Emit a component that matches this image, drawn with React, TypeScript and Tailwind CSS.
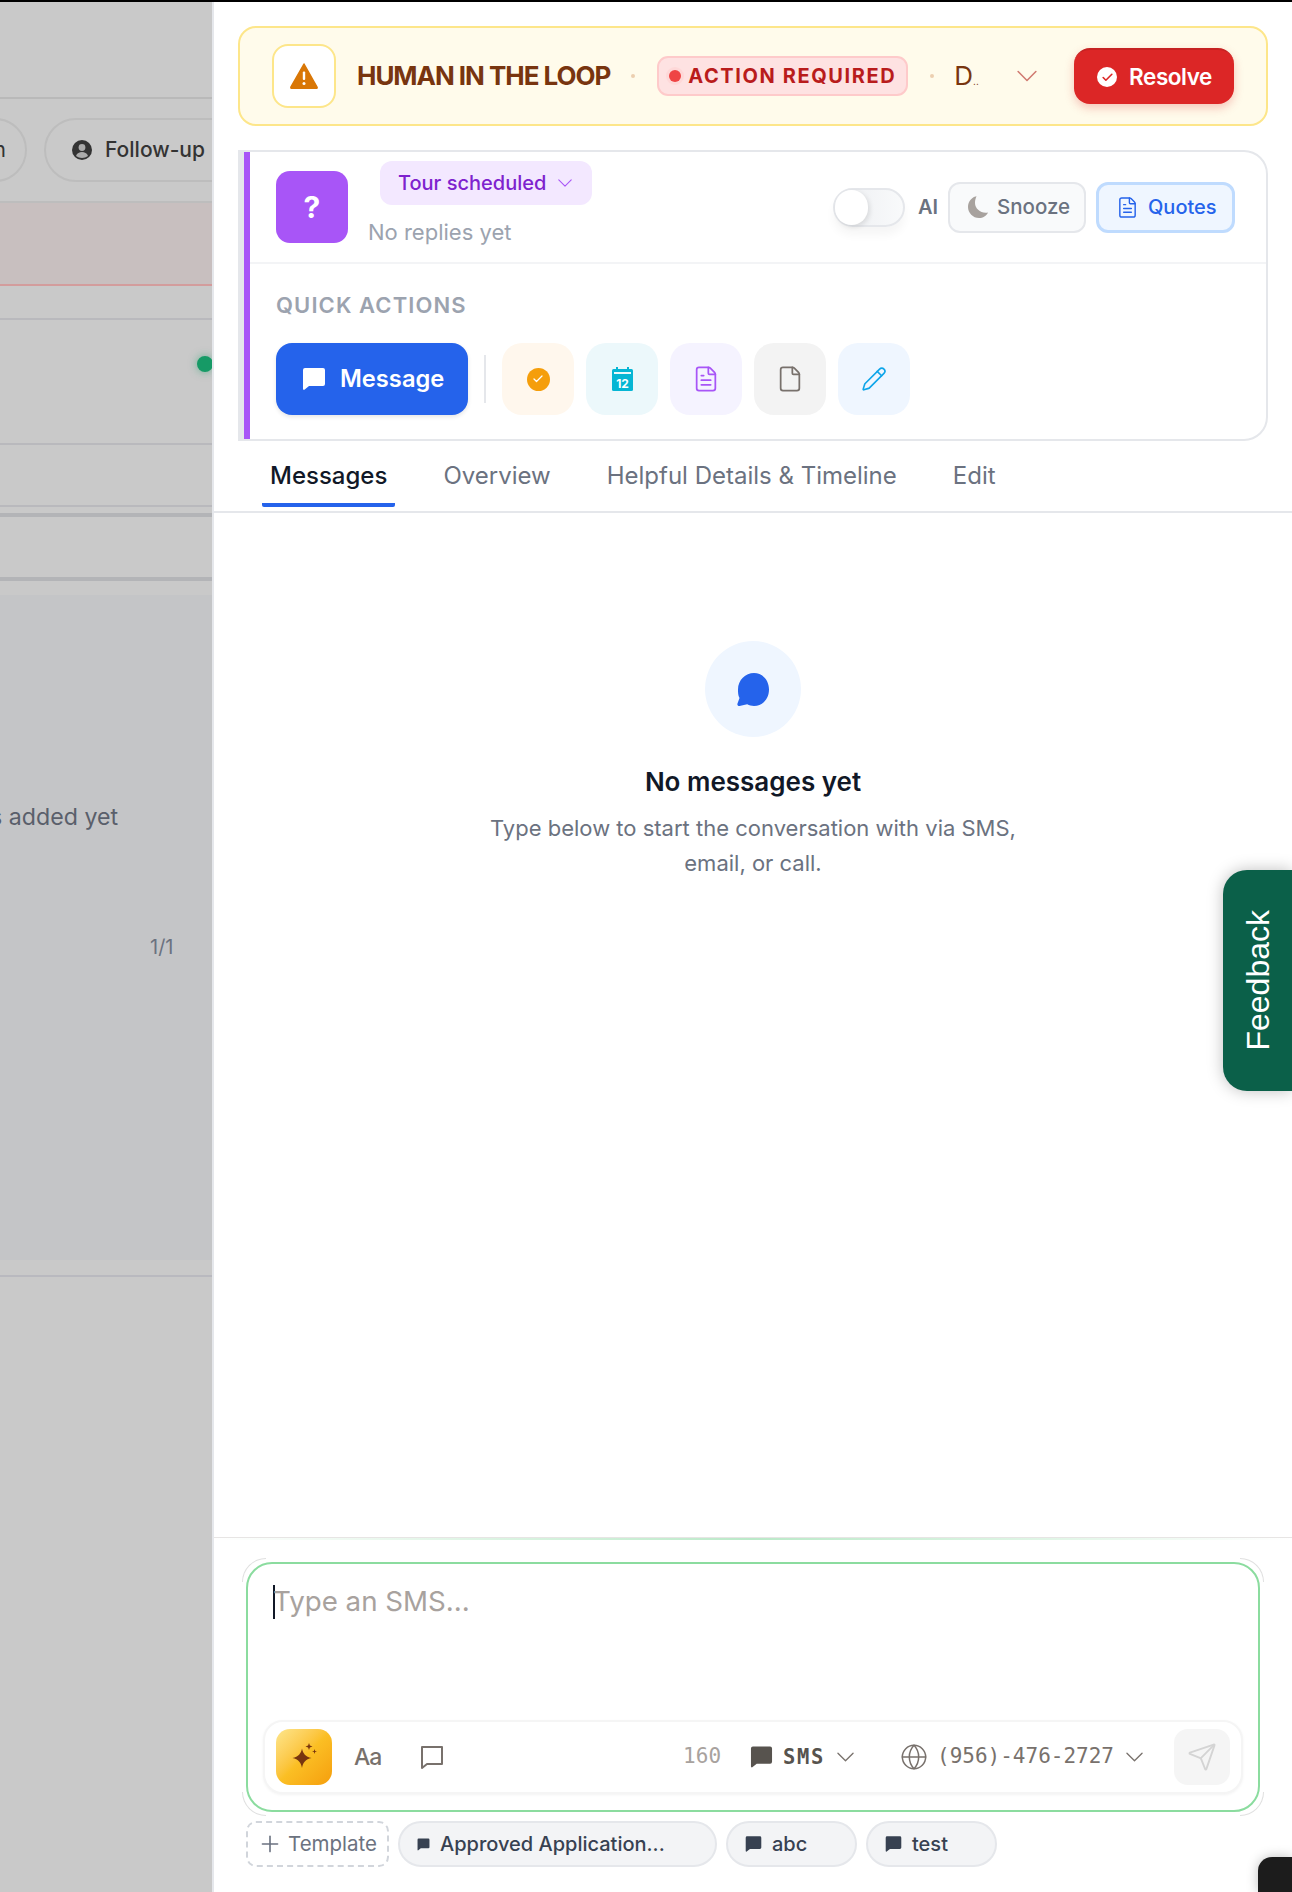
import { Check, File, FileText, Globe, Pencil, Plus, Send } from 'lucide-react';

const mono = 'font-["DejaVu_Sans_Mono",monospace]';

function Chev({ className }: { className: string }) {
  return (
    <svg viewBox="0 0 18 10" fill="none" stroke="currentColor" strokeWidth="1.4" strokeLinecap="round" strokeLinejoin="round" className={className}>
      <path d="M1 1l8 8 8-8" />
    </svg>
  );
}

function Bubble({ className }: { className: string }) {
  return (
    <svg viewBox="0 0 24 22" fill="currentColor" className={className}>
      <path d="M3 0h18a2 2 0 0 1 2 2v14a2 2 0 0 1-2 2H7l-4.600 3.700A1 1 0 0 1 1 21V2a2 2 0 0 1 2-2z" />
    </svg>
  );
}

function Chip({ label, wide }: { label: string; wide?: boolean }) {
  return (
    <div className={`flex h-[46px] items-center rounded-full border-2 border-[#e5e7eb] bg-[#f3f4f6] pl-[17px] text-[20px] font-medium text-[#374151] ${wide ? 'w-[319px] gap-[10px]' : 'w-[131px] gap-[10px]'}`}>
      <Bubble className={wide ? 'h-[13px] w-[13px] text-[#374151]' : 'h-[16px] w-[17px] text-[#374151]'} />
      {label}
    </div>
  );
}

function Backdrop() {
  return (
    <aside className="relative w-[212px] shrink-0 overflow-hidden bg-[#c9c9c9]">
      <div className="h-[97px] border-b-2 border-[#b9b9b9]" />
      <div className="flex h-[104px] items-center gap-[17px] border-b-2 border-[#bdbdbd]">
        <div className="-ml-[40px] flex h-[64px] w-[67px] shrink-0 items-center justify-end rounded-full border-2 border-[#bdbdbd] pr-[19px] text-[21px] text-[#333]">n</div>
        <div className="flex h-[64px] w-[220px] shrink-0 items-center gap-[13px] rounded-full border-2 border-[#bdbdbd] pl-[26px] text-[21px] font-medium text-[#333]">
          <svg viewBox="0 0 20 20" className="h-5 w-5 shrink-0">
            <circle cx="10" cy="10" r="10" fill="#333" />
            <circle cx="10" cy="7.500" r="3.400" fill="#aaa" />
            <path d="M4 16c1-3 3.500-4 6-4s5 1 6 4c-3.500 2.500-8.500 2.500-12 0z" fill="#aaa" />
          </svg>
          Follow-up
        </div>
      </div>
      <div className="h-[83px] border-b-2 border-[#d39c9c] bg-[#c8bfbf]" />
      <div className="h-[34px] border-b-2 border-[#b9b9bd]" />
      <div className="h-[125px] border-b-2 border-[#b9b9bd] pt-[36px]">
        <div className="ml-auto -mr-px h-4 w-4 rounded-full bg-[#169a66] shadow-[0_0_8px_#169a6688]" />
      </div>
      <div className="h-[62px] border-b-2 border-[#b9b9bd]" />
      <div className="mt-[6px] h-[4px] bg-[#b3b4b7]" />
      <div className="h-[60px]" />
      <div className="h-[4px] bg-[#b3b4b7]" />
      <div className="h-[14px]" />
      <div className="h-[665px] bg-[#c4c5c7] text-[#5a5f6b]">
        <div className="-ml-[10px] whitespace-nowrap pt-[208px] text-[23.200px] leading-[28px]">s added yet</div>
        <div className="mt-[102px] pl-[150px] text-[20px] leading-[28px] text-[#6b7280]">1/1</div>
      </div>
      <div className="h-[17px] border-b-2 border-[#b9b9bf]" />
    </aside>
  );
}

function Banner() {
  return (
    <div className="mx-6 flex h-[100px] items-center rounded-[18px] border-2 border-[#fde68a] bg-[#fffbeb] px-[32px]">
      <div className="flex h-[64px] w-[64px] shrink-0 items-center justify-center rounded-[16px] border-2 border-[#fde68a] bg-white">
        <svg viewBox="0 0 28 26" className="h-[26px] w-[28px]">
          <path d="M14 1L27 24a1 1 0 0 1-1 1.500H2A1 1 0 0 1 1 24z" fill="#d97706" stroke="#d97706" strokeWidth="1.500" strokeLinejoin="round" />
          <rect x="12.800" y="8.500" width="2.400" height="8.500" rx="1" fill="#fff" />
          <circle cx="14" cy="20.500" r="1.500" fill="#fff" />
        </svg>
      </div>
      <div className="ml-[21px] text-[26px] leading-none font-bold tracking-[-0.04em] whitespace-nowrap text-[#78350f]">HUMAN IN THE LOOP</div>
      <div className="ml-[21px] h-[4px] w-[4px] rounded-full bg-[#eccfb0]" />
      <div className="ml-[22px] flex h-[40px] w-[251px] shrink-0 items-center gap-[7px] rounded-[11px] border-2 border-[#fecaca] bg-[#fee2e2] pl-[10px]">
        <div className="h-3 w-3 rounded-full bg-[#ef4444] shadow-[0_0_0_3px_#fecaca66]" />
        <span className="text-[20px] leading-none font-bold tracking-[0.08em] whitespace-nowrap text-[#b91c1c]">ACTION REQUIRED</span>
      </div>
      <div className="ml-[22px] h-[4px] w-[4px] rounded-full bg-[#eccfb0]" />
      <div className="ml-[20px] text-[26px] leading-none text-[#78350f]">
        D<span className="text-[10px]">..</span>
      </div>
      <Chev className="ml-[38px] h-[12px] w-[20px] text-[#d07a70]" />
      <div className="ml-auto flex h-[56px] w-[160px] items-center justify-center gap-[12px] rounded-[16px] border-t-2 border-[#c62222] bg-[#dc2626] pl-[1px] text-[22.500px] font-semibold tracking-[-0.02em] text-white shadow-[0_4px_10px_#dc262640]">
        <span className="flex h-5 w-5 items-center justify-center rounded-full bg-white">
          <Check size={13} strokeWidth={3} className="text-[#dc2626]" />
        </span>
        Resolve
      </div>
    </div>
  );
}

function ContactCard() {
  return (
    <div className="mx-6 mt-6 h-[291px] rounded-r-[24px] border-2 border-l-[6px] border-[#e5e7eb]">
      <div className="h-full border-l-[6px] border-[#a855f7]">
        <div className="flex h-[112px] items-center border-b-2 border-[#f3f4f6] pl-[26px] pr-[31px]">
          <div className="flex h-[72px] w-[72px] shrink-0 items-center justify-center rounded-[14px] bg-[#a855f7] text-[30px] font-bold text-white">?</div>
          <div className="mb-[10px] ml-[20px]">
            <div className="ml-3 flex h-[44px] w-[212px] items-center gap-[12px] rounded-[12px] bg-[#f3e8ff] pl-[18px] text-[20px] font-medium text-[#7e22ce]">
              Tour scheduled
              <Chev className="h-[8px] w-[14px] text-[#a855f7]" />
            </div>
            <div className="mt-4 text-[22px] leading-[22px] text-[#9ca3af]">No replies yet</div>
          </div>
          <div className="ml-auto flex items-center">
            <div className="h-[39px] w-[72px] shrink-0 rounded-full border-2 border-[#e5e7eb] bg-gradient-to-r from-[#eceef1] to-[#f9fafb] shadow-[0_8px_10px_#0000000a]">
              <div className="h-[35px] w-[33px] rounded-full bg-white shadow-[2px_2px_5px_#0000001a]" />
            </div>
            <span className="ml-[13px] text-[20px] font-semibold text-[#6b7280]">AI</span>
            <div className="ml-[10px] flex h-[51px] w-[138px] items-center gap-[9px] rounded-[12px] border-2 border-[#e5e7eb] bg-[#f9fafb] pl-[18px] text-[20.500px] font-medium text-[#6b7280]">
              <svg viewBox="0 0 20 22" fill="#a8a29e" className="h-[22px] w-[20px]">
                <path d="M9 0C4 1 0 5.500 0 11c0 6 5 11 11 11 4 0 7.500-2 9-5.500-6.500 1.500-13-3.500-13-9.500 0-3 .8-5.500 2-7.500z" />
              </svg>
              Snooze
            </div>
            <div className="ml-[10px] flex h-[51px] w-[139px] items-center gap-[9px] rounded-[12px] border-[3px] border-[#bfdbfe] bg-[#eff6ff] pl-[17px] text-[20px] font-medium text-[#2563eb]">
              <FileText size={23} strokeWidth={1.5} />
              Quotes
            </div>
          </div>
        </div>
        <div className="pl-[26px] pt-[28px]">
          <div className="text-[22px] leading-[26px] font-semibold tracking-[0.05em] text-[#9ca3af]">QUICK ACTIONS</div>
          <div className="mt-[25px] flex items-center">
            <div className="flex h-[72px] w-[192px] items-center gap-[14px] rounded-[16px] bg-[#2563eb] pl-[26px] text-[23.700px] font-semibold text-white shadow-[0_2px_4px_#0000001a]">
              <Bubble className="h-[22px] w-[24px] text-white" />
              Message
            </div>
            <div className="mx-4 h-[48px] w-[2px] bg-[#e5e7eb]" />
            <div className="flex gap-3">
              <div className="flex h-[72px] w-[72px] items-center justify-center rounded-[20px] bg-[#fff7ed]">
                <span className="flex h-[23px] w-[23px] items-center justify-center rounded-full bg-[#f59e0b]">
                  <Check size={12} strokeWidth={2.500} className="text-white" />
                </span>
              </div>
              <div className="flex h-[72px] w-[72px] items-center justify-center rounded-[20px] bg-[#ecf8fb]">
                <svg viewBox="0 0 21 24" className="h-[24px] w-[21px]">
                  <path d="M4 0h2v3H4zM15 0h2v3h-2z" fill="#06b6d4" />
                  <rect y="2" width="21" height="22" rx="1.500" fill="#06b6d4" />
                  <rect x="2" y="5" width="17" height="2" fill="#ecf8fb" />
                  <text x="10.500" y="20.500" textAnchor="middle" fontSize="12" fontWeight="700" fontFamily="Inter, sans-serif" fill="#fff">12</text>
                </svg>
              </div>
              <div className="flex h-[72px] w-[72px] items-center justify-center rounded-[20px] bg-[#f5f3ff]">
                <FileText size={28} strokeWidth={1.5} className="text-[#a855f7]" />
              </div>
              <div className="flex h-[72px] w-[72px] items-center justify-center rounded-[20px] bg-[#f3f3f3]">
                <File size={28} strokeWidth={1.5} className="text-[#78716c]" />
              </div>
              <div className="flex h-[72px] w-[72px] items-center justify-center rounded-[20px] bg-[#eff6ff]">
                <Pencil size={26} strokeWidth={1.5} className="text-[#0ea5e9]" />
              </div>
            </div>
          </div>
        </div>
      </div>
    </div>
  );
}

function Tabs() {
  return (
    <div className="flex h-[72px] gap-[40px] border-b-2 border-[#e5e7eb] pl-12 pt-[19px] text-[24px] leading-[32px] text-[#6b7280]">
      <div className="h-[47px] rounded-b-[2px] border-b-4 border-[#2563eb] px-2 font-medium text-[#111827]">Messages</div>
      <div className="px-2">Overview</div>
      <div className="px-2">Helpful Details &amp; Timeline</div>
      <div className="px-2">Edit</div>
    </div>
  );
}

function EmptyState() {
  return (
    <div className="flex flex-1 flex-col items-center pt-[128px]">
      <div className="flex h-[96px] w-[96px] items-center justify-center rounded-full bg-[#eff6ff]">
        <svg viewBox="0 0 32 33" fill="#2563eb" className="h-[33px] w-[32px]">
          <path d="M17 0c8.500 0 15 7 15 16.500S25.500 33 17 33c-2.500 0-4.800-.6-6.800-1.700L2.500 33C.8 33.300 0 32 .5 30.500l2-5.500C1 22.500 1 19 1 16.500 1 7 8.500 0 17 0z" />
        </svg>
      </div>
      <div className="mt-[27px] text-[26px] leading-[36px] font-semibold text-[#111827]">No messages yet</div>
      <div className="mt-[11px] w-[560px] text-center text-[22px] leading-[35px] text-[#6b7280]">
        Type below to start the conversation with via SMS,
        <br />
        email, or call.
      </div>
    </div>
  );
}

function Composer() {
  return (
    <div className="h-[355px] shrink-0">
      <div className="h-px bg-[#e7e5e4]" />
      <div className="h-[2px] bg-gradient-to-r from-white via-[#bbe9c9] to-white" />
      <div className="px-8 pt-[22px]">
        <div className="relative flex h-[250px] flex-col rounded-[26px] border-2 border-[#8bdc9f] px-[15px] pb-[16px] pt-[21px]">
          <div className="absolute -left-[6px] -top-[6px] h-[24px] w-[24px] rounded-tl-[30px] border-l border-t border-[#e0e0e0]" />
          <div className="absolute -right-[6px] -top-[6px] h-[24px] w-[24px] rounded-tr-[30px] border-r border-t border-[#e0e0e0]" />
          <div className="absolute -bottom-[6px] -left-[6px] h-[24px] w-[24px] rounded-bl-[30px] border-b border-l border-[#e0e0e0]" />
          <div className="absolute -bottom-[6px] -right-[6px] h-[24px] w-[24px] rounded-br-[30px] border-b border-r border-[#e0e0e0]" />
          <div className="flex h-[34px] items-center pl-[10px] text-[27.700px] text-[#a8a29e]">
            <div className="-mr-[2px] h-[34px] w-[2px] shrink-0 bg-[#111827]" />
            Type an SMS...
          </div>
          <div className="mt-auto flex h-[74px] items-center rounded-[20px] border-2 border-[#f5f5f5] bg-white pl-[11px] pr-[11px] shadow-[0_1px_3px_#0000000d]">
            <div className="flex h-[56px] w-[56px] items-center justify-center rounded-[14px] bg-gradient-to-br from-[#fde68a] via-[#fbbf24] to-[#f59e0b]">
              <svg viewBox="0 0 26 28" fill="#78350f" className="h-[28px] w-[26px]">
                <path d="M11 5.500c.9 5 3.600 8.200 9.500 9.500-5.900 1.300-8.600 4.500-9.500 10-.9-5.500-3.600-8.700-9.500-10C7.400 13.700 10.100 10.500 11 5.500z" />
                <path d="M18 0l.9 2.600 2.600.9-2.600.9-.9 2.600-.9-2.600-2.600-.9 2.600-.9zM23.500 6l.6 1.900 1.900.6-1.900.6-.6 1.900-.6-1.900-1.900-.6 1.900-.6z" />
              </svg>
            </div>
            <span className="ml-[22px] w-[27px] text-[23px] leading-none font-medium tracking-[-0.05em] text-[#78716c]">Aa</span>
            <svg viewBox="0 0 24 24" fill="none" stroke="#78716c" strokeWidth="2" strokeLinejoin="round" className="ml-[39px] h-6 w-6">
              <path d="M2 2h20v17H7l-5 4z" />
            </svg>
            <div className="ml-auto flex items-center">
              <span className={`${mono} text-[21px] text-[#a8a29e]`}>160</span>
              <Bubble className="ml-[29px] h-[22px] w-[23px] text-[#57534e]" />
              <span className={`${mono} ml-[10px] text-[20.500px] font-bold tracking-[0.08em] text-[#57534e]`}>SMS</span>
              <Chev className="ml-[12px] h-[10px] w-[17px] text-[#78716c]" />
              <Globe size={28} strokeWidth={1.3} className="ml-[46px] text-[#78716c]" />
              <span className={`${mono} ml-[9px] text-[21px] text-[#78716c]`}>(956)-476-2727</span>
              <Chev className="ml-[12px] h-[10px] w-[17px] text-[#78716c]" />
              <div className="ml-[31px] flex h-[56px] w-[56px] items-center justify-center rounded-[14px] bg-[#f5f5f5]">
                <Send size={30} strokeWidth={1.5} className="text-[#d4d4d4]" />
              </div>
            </div>
          </div>
        </div>
        <div className="mt-[9px] flex gap-[9px]">
          <div className="flex h-[46px] w-[143px] items-center gap-[5px] rounded-[10px] border-2 border-dashed border-[#d1d5db] pl-[9px] text-[20.500px] text-[#6b7280]">
            <Plus size={26} strokeWidth={1.5} />
            Template
          </div>
          <Chip label="Approved Application..." wide />
          <Chip label="abc" />
          <Chip label="test" />
        </div>
      </div>
    </div>
  );
}

export default function App() {
  return (
    <div className="relative flex h-[1892px] w-[1292px] flex-col overflow-hidden bg-white font-['Inter',sans-serif]">
      <div className="h-[2px] shrink-0 bg-black" />
      <div className="flex min-h-0 flex-1">
        <Backdrop />
        <main className="flex min-w-0 flex-1 flex-col border-l-2 border-[#e5e7eb] pt-6">
          <Banner />
          <ContactCard />
          <Tabs />
          <EmptyState />
          <Composer />
        </main>
      </div>
      <div className="absolute right-0 top-[870px] flex h-[221px] w-[69px] items-center justify-center rounded-l-[24px] bg-[#0b6049] pl-[1px] shadow-[0_0_16px_#00000040]">
        <span className="rotate-180 font-['Liberation_Sans',sans-serif] text-[32px] text-white [writing-mode:vertical-rl]">Feedback</span>
      </div>
      <div className="absolute bottom-0 right-0 h-[35px] w-[34px] rounded-tl-[14px] bg-[#1c1c1c] shadow-[0_0_12px_#00000040]" />
    </div>
  );
}
